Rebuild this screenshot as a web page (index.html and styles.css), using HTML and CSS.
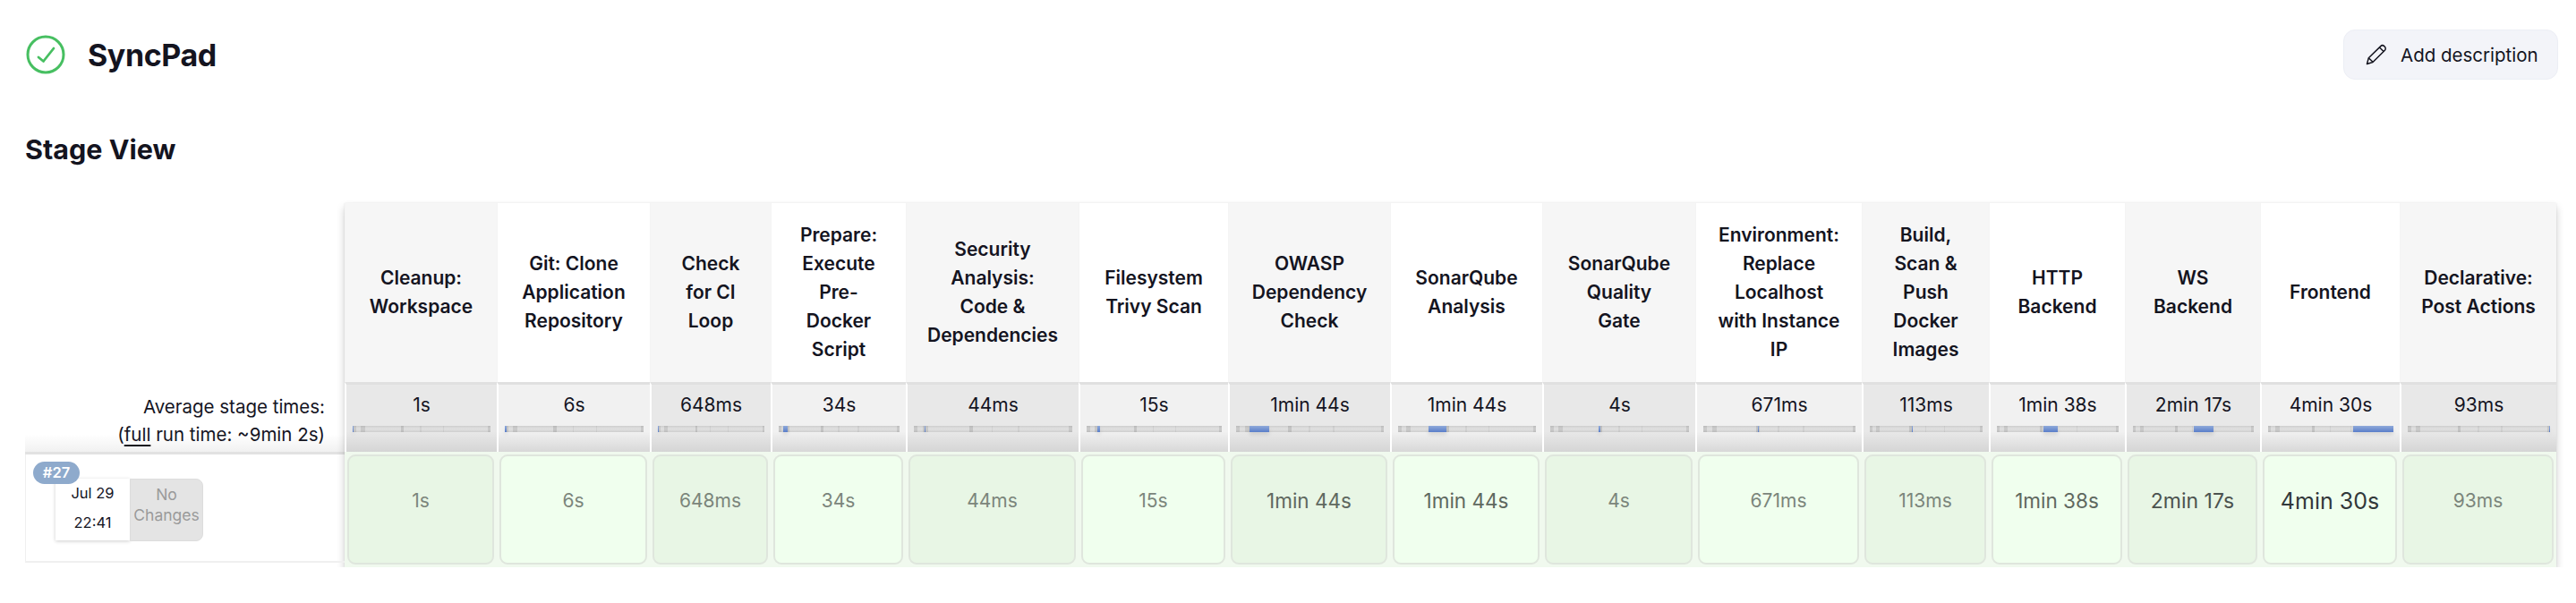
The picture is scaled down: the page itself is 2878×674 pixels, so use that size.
FILE: index.html
```html
<!DOCTYPE html>
<html lang="en">

<head>
    <meta charset="UTF-8">
    <title>SyncPad</title>
    <link rel="stylesheet" href="styles.css">
</head>

<body>
    <div class="job_head">
        <div class="job_title">
            <svg class="status_icon" width="46" height="46" viewBox="0 0 46 46">
                <circle cx="23" cy="23" r="20" fill="none" stroke="#47bf61" stroke-width="3" />
                <path d="M15 26l5.500 4.500L32 16" fill="none" stroke="#47bf61" stroke-width="2.800" stroke-linecap="round" stroke-linejoin="round" />
            </svg>
            <h1>SyncPad</h1>
        </div>
        <button class="add_desc">
            <svg width="24" height="24" viewBox="0 0 24 24">
                <path d="M1.500 22.500l1.800-6.800L16.800 2.600c1.100-1.100 2.800-1.100 3.900 0l.7.700c1.100 1.100 1.100 2.800 0 3.900L8 20.500zM3.300 15.700l5 4.800M15.500 4l4.800 4.800" fill="none" stroke="#14141f" stroke-width="1.500" stroke-linejoin="round" />
            </svg>
            Add description
        </button>
    </div>

    <h2 class="section_title">Stage View</h2>

    <div class="stage_view">
        <div class="side">
            <div class="side_top"></div>
            <div class="side_avg">
                <div>Average stage times:</div>
                <div>(<u>full</u> run time: ~9min 2s)</div>
            </div>
            <div class="side_build">
                <span class="badge">#27</span>
                <div class="build_date">
                    <div>Jul 29</div>
                    <div>22:41</div>
                </div>
                <div class="no_changes">No<br>Changes</div>
            </div>
        </div>

        <div class="stages">
            <div class="head">Cleanup:<br>Workspace</div>
            <div class="head">Git: Clone<br>Application<br>Repository</div>
            <div class="head">Check<br>for CI<br>Loop</div>
            <div class="head">Prepare:<br>Execute<br>Pre-<br>Docker<br>Script</div>
            <div class="head">Security<br>Analysis:<br>Code &amp;<br>Dependencies</div>
            <div class="head">Filesystem<br>Trivy Scan</div>
            <div class="head">OWASP<br>Dependency<br>Check</div>
            <div class="head">SonarQube<br>Analysis</div>
            <div class="head">SonarQube<br>Quality<br>Gate</div>
            <div class="head">Environment:<br>Replace<br>Localhost<br>with Instance<br>IP</div>
            <div class="head">Build,<br>Scan &amp;<br>Push<br>Docker<br>Images</div>
            <div class="head">HTTP<br>Backend</div>
            <div class="head">WS<br>Backend</div>
            <div class="head">Frontend</div>
            <div class="head">Declarative:<br>Post Actions</div>

            <div class="avg"><span>1s</span><div class="track"><div class="fill" style="left:0;width:0.7%"></div></div></div>
            <div class="avg"><span>6s</span><div class="track"><div class="fill" style="left:0;width:1.5%"></div></div></div>
            <div class="avg"><span>648ms</span><div class="track"><div class="fill" style="left:0;width:1%"></div></div></div>
            <div class="avg"><span>34s</span><div class="track"><div class="fill" style="left:3.6%;width:3.6%"></div></div></div>
            <div class="avg"><span>44ms</span><div class="track"><div class="fill" style="left:6.7%;width:0.6%"></div></div></div>
            <div class="avg"><span>15s</span><div class="track"><div class="fill" style="left:8%;width:2%"></div></div></div>
            <div class="avg"><span>1min 44s</span><div class="track"><div class="fill" style="left:9%;width:13.3%"></div></div></div>
            <div class="avg"><span>1min 44s</span><div class="track"><div class="fill" style="left:22.3%;width:12.7%"></div></div></div>
            <div class="avg"><span>4s</span><div class="track"><div class="fill" style="left:35%;width:1.2%"></div></div></div>
            <div class="avg"><span>671ms</span><div class="track"><div class="fill" style="left:35.8%;width:0.8%"></div></div></div>
            <div class="avg"><span>113ms</span><div class="track"><div class="fill" style="left:37.5%;width:0.6%"></div></div></div>
            <div class="avg"><span>1min 38s</span><div class="track"><div class="fill" style="left:38.6%;width:11.6%"></div></div></div>
            <div class="avg"><span>2min 17s</span><div class="track"><div class="fill" style="left:50.3%;width:16.6%"></div></div></div>
            <div class="avg"><span>4min 30s</span><div class="track"><div class="fill" style="left:67.5%;width:32.5%"></div></div></div>
            <div class="avg"><span>93ms</span><div class="track"><div class="fill" style="left:99.4%;width:0.6%"></div></div></div>

            <div class="cell"><div class="box t1">1s</div></div>
            <div class="cell"><div class="box t1">6s</div></div>
            <div class="cell"><div class="box t1">648ms</div></div>
            <div class="cell"><div class="box t1">34s</div></div>
            <div class="cell"><div class="box t1">44ms</div></div>
            <div class="cell"><div class="box t1">15s</div></div>
            <div class="cell"><div class="box t2">1min 44s</div></div>
            <div class="cell"><div class="box t2">1min 44s</div></div>
            <div class="cell"><div class="box t1">4s</div></div>
            <div class="cell"><div class="box t1">671ms</div></div>
            <div class="cell"><div class="box t1">113ms</div></div>
            <div class="cell"><div class="box t2">1min 38s</div></div>
            <div class="cell"><div class="box t3">2min 17s</div></div>
            <div class="cell"><div class="box t4">4min 30s</div></div>
            <div class="cell"><div class="box t1">93ms</div></div>
        </div>
    </div>
</body>

</html>
```

FILE: styles.css
```css
* {
    box-sizing: border-box;
}

body {
    margin: 0;
    padding: 33px 20px 0 28px;
    background: #fff;
    color: #14141f;
    font-family: Inter, "Liberation Sans", sans-serif;
    font-size: 21px;
}

.job_head {
    display: flex;
    justify-content: space-between;
    align-items: center;
    height: 56px;
}

.job_title {
    display: flex;
    align-items: center;
    gap: 24px;
}

.status_icon {
    display: block;
}

.job_title h1 {
    margin: 0;
    font-size: 34px;
    font-weight: 700;
    letter-spacing: -0.4px;
}

.add_desc {
    display: flex;
    align-items: center;
    gap: 15px;
    width: 240px;
    height: 56px;
    padding: 0 0 0 24px;
    border: 1px solid #eceef5;
    border-radius: 13px;
    background: #f3f4f9;
    color: #14141f;
    font-family: inherit;
    font-size: 20.500px;
}

.section_title {
    margin: 58px 0 40px;
    height: 40px;
    font-size: 30.500px;
    line-height: 40px;
    font-weight: 700;
}

.stage_view {
    display: flex;
    align-items: flex-start;
}

/* left column with the run info */
.side {
    width: 357px;
    flex: none;
}

.side_top {
    height: 200px;
}

.side_avg {
    height: 81px;
    padding: 12px 22px 0 0;
    border-bottom: 3px solid #e2e2e2;
    background: linear-gradient(#fff 75%, #f1f1f1);
    font-size: 20.500px;
    line-height: 31px;
    text-align: right;
}

.side_avg u {
    text-underline-offset: 4px;
}

.side_build {
    position: relative;
    display: flex;
    align-items: flex-start;
    height: 121px;
    padding: 27px 0 0 33px;
    border-left: 1px solid #f0f0f0;
    border-bottom: 2px solid #f0f0f0;
}

.badge {
    position: absolute;
    left: 8px;
    top: 8px;
    width: 52px;
    height: 25px;
    border-radius: 13px;
    background: #8eaacc;
    color: #fff;
    font-size: 16.500px;
    font-weight: 600;
    line-height: 25px;
    text-align: center;
}

.build_date {
    width: 83px;
    height: 69px;
    background: #fff;
    box-shadow: 0 1px 4px rgba(0, 0, 0, 0.2);
    font-size: 16.500px;
    line-height: 33px;
    text-align: center;
}

.no_changes {
    width: 82px;
    height: 70px;
    padding-top: 5px;
    border-radius: 0 8px 8px 0;
    border: 1px solid #ddd;
    background: #e4e4e4;
    color: #9a9a9a;
    font-size: 17.500px;
    line-height: 23px;
    text-align: center;
}

/* stage table */
.stages {
    display: grid;
    grid-template-columns: 170px 171px 135px 151px 193px 167px 181px 170px 171px 186px 142px 152px 151px 156px 175px;
    grid-template-rows: 200px 78px 129px;
    box-shadow: 0 5px 9px rgba(0, 0, 0, 0.2), 0 0 2px rgba(0, 0, 0, 0.08);
}

.head {
    display: flex;
    align-items: center;
    justify-content: center;
    border-left: 1px solid #f4f4f4;
    font-size: 21px;
    font-weight: 600;
    line-height: 32px;
    text-align: center;
}

.head:nth-child(odd) {
    background: #f6f6f6;
}

.avg {
    padding: 11px 7px 0;
    border-top: 3px solid #e0e0e0;
    border-left: 2px solid #fff;
    background: linear-gradient(#f1f1f1 70%, #d8d8d8);
    line-height: 24px;
    text-align: center;
}

.avg:nth-child(even) {
    background: linear-gradient(#e8e8e8 70%, #d5d5d5);
}

.track {
    position: relative;
    height: 7px;
    margin-top: 11px;
    background:
        linear-gradient(90deg, rgba(0, 0, 0, 0.09) 0 2.400%, transparent 2.400% 5.800%, rgba(0, 0, 0, 0.09) 5.800% 9%, transparent 9% 35%, rgba(0, 0, 0, 0.11) 35% 37.300%, transparent 37.300% 49%, rgba(0, 0, 0, 0.05) 49% 50%, transparent 50% 65.500%, rgba(0, 0, 0, 0.05) 65.500% 66.500%, transparent 66.500% 98%, rgba(0, 0, 0, 0.09) 98%),
        linear-gradient(#cecece, #dedede 40% 60%, #cecece);
}

.fill {
    position: absolute;
    top: 0;
    height: 7px;
    background: linear-gradient(#8fa9da, #5a7ec9);
    box-shadow: 0 3px 4px rgba(0, 0, 0, 0.1);
}

.cell {
    padding: 3px;
    background: #f0f9ee;
}

.box {
    display: flex;
    align-items: center;
    justify-content: center;
    height: 100%;
    padding-bottom: 20px;
    border: 2px solid #dfe6dd;
    border-radius: 9px;
    background: #e8f6e5;
}

.cell:nth-child(even) .box {
    background: #f0ffee;
}

.t1 {
    color: #7b857b;
    font-size: 21px;
}

.t2 {
    color: #5f685f;
    font-size: 22.500px;
}

.t3 {
    color: #4c534f;
    font-size: 23px;
}

.t4 {
    color: #32383a;
    font-size: 25px;
}
```
